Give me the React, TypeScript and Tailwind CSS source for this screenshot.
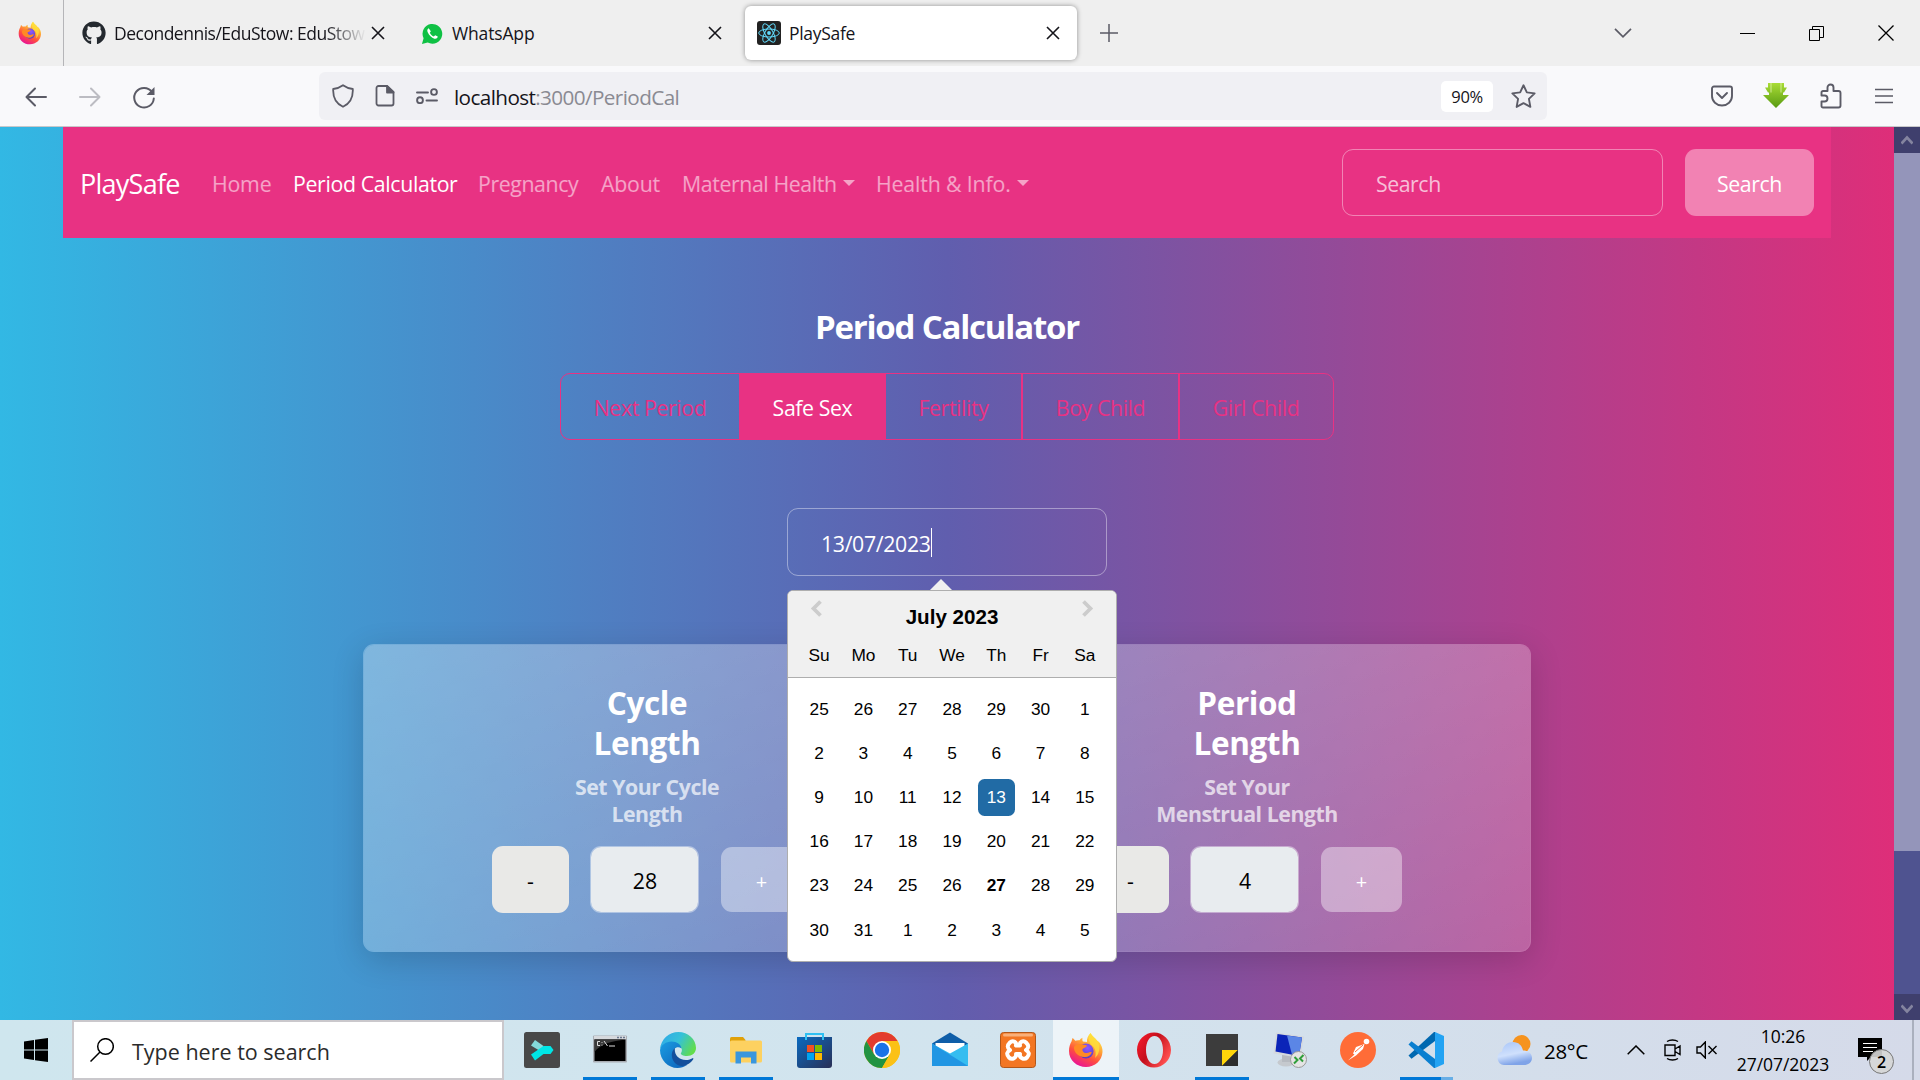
import React from "react";
import { FaGithub } from "react-icons/fa";

function FirefoxLogo({ className, id }: { className: string; id: string }) {
  return (
    <svg viewBox="0 0 36 36" className={className}>
      <defs>
        <linearGradient id={id + "a"} x1="0.8" y1="0.05" x2="0.3" y2="1">
          <stop offset="0" stopColor="#fff44f" />
          <stop offset="0.35" stopColor="#ffa436" />
          <stop offset="0.65" stopColor="#ff4f3e" />
          <stop offset="1" stopColor="#e8109a" />
        </linearGradient>
        <radialGradient id={id + "b"} cx="0.6" cy="0.3" r="0.8">
          <stop offset="0" stopColor="#9059ff" />
          <stop offset="1" stopColor="#4a3bb8" />
        </radialGradient>
      </defs>
      <path
        d="M22.5 1c1.5 3.5 5 5 6.5 7.500 1 .5 2 1.200 2.500 2 2 3 3.300 6 3 9.500C34 28.500 27 35 18 35S1 28.500 1 19c0-4 1-7 2.500-9.500L4.500 6c1 .5 2 1.700 2.800 2.800 1-.6 3-.8 4.200-.5.7-1.200 1.700-2 3-2.600-.3 1.300-.2 2.700.4 3.700 1.500.2 3 .4 4.100.6C18.500 7 20 3.500 22.500 1z"
        fill={`url(#${id}a)`}
      />
      <circle cx="18" cy="19" r="7.600" fill={`url(#${id}b)`} />
      <path d="M6 15c2-3 6-3.500 8.500-2.500 2 .4 4 .6 4.500 1.300-.4 1.800-3 2-4.500 3.200-.5 2 1.500 4.500 4.500 4 2-.4 3-1.500 4.800-.8-1 3.300-4.300 5.300-7.800 4.800C10 24.500 5.500 20 6 15z" fill="#ff8a24" />
      <path d="M22.500 1c1.500 3.500 7 6 8.500 12 1 5-.5 10-4 13 1.500-5 .5-10-3-12.500C21 11 19.500 6 22.500 1z" fill="#ffdd3a" opacity="0.85" />
    </svg>
  );
}

function Cross({ className }: { className: string }) {
  return (
    <svg viewBox="0 0 14 14" className={className} fill="none" stroke="currentColor">
      <path d="M1 1l12 12M13 1L1 13" strokeWidth="1.600" />
    </svg>
  );
}

function TabStrip() {
  return (
    <div className="flex h-[66px] items-center bg-[#efefef] text-[17.5px] text-[#15141a]">
      <div className="flex h-full w-[64px] items-center border-r border-[#b5b5b8] pl-[18px]">
        <FirefoxLogo className="h-6 w-6" id="tabff" />
      </div>
      <div className="flex w-[347px] items-center pl-[18px]">
        <FaGithub className="h-6 w-6 text-[#24292f]" />
        <span className="ml-[8px] w-[252px] overflow-hidden whitespace-nowrap pt-px tracking-[-0.5px] [mask-image:linear-gradient(to_right,black_84%,transparent_100%)]">
          Decondennis/EduStow: EduStow
        </span>
        <Cross className="ml-[5px] h-3.5 w-3.5" />
      </div>
      <div className="flex w-[334px] items-center pl-[10px]">
        <svg viewBox="0 0 24 24" className="h-[23px] w-[23px]">
          <path d="M1 23l1.700-6A10.300 10.300 0 1 1 7 21.400z" fill="#0fc144" />
          <path d="M8 6.500c-1.500.8-1.800 2.500-1 4.300 1.500 3.300 4 5.600 7 6.600 1.600.4 3.300-.4 3.500-2.200l-2.700-1.500-1.400 1.400c-2-.8-3.300-2.200-4.200-4l1.100-1.500z" fill="#fff" />
        </svg>
        <span className="ml-[8px] w-[256px] pt-px tracking-[-0.15px]">WhatsApp</span>
        <Cross className="h-3.5 w-3.5" />
      </div>
      <div className="flex h-[54px] w-[332px] items-center rounded-[6px] bg-white pl-[12px] shadow-[0_0_5px_rgba(0,0,0,0.4)]">
        <svg viewBox="0 0 24 24" className="h-6 w-6" fill="none" stroke="#61dafb" strokeWidth="1">
          <rect width="24" height="24" rx="3" fill="#222" stroke="none" />
          <ellipse cx="12" cy="12" rx="10.300" ry="4" />
          <ellipse cx="12" cy="12" rx="10.300" ry="4" transform="rotate(60 12 12)" />
          <ellipse cx="12" cy="12" rx="10.300" ry="4" transform="rotate(120 12 12)" />
          <circle cx="12" cy="12" r="1.900" fill="#61dafb" stroke="none" />
        </svg>
        <span className="ml-[8px] w-[257px] pt-px tracking-[-0.3px]">PlaySafe</span>
        <Cross className="h-3.5 w-3.5" />
      </div>
      <svg viewBox="0 0 18 18" className="ml-[23px] h-[18px] w-[18px]" stroke="#5b5b66" strokeWidth="1.500">
        <path d="M9 0v18M0 9h18" />
      </svg>
      <div className="ml-auto flex items-center pr-[26px]">
        <svg viewBox="0 0 18 10" className="mr-[108px] h-[10px] w-[18px]" fill="none" stroke="#5b5b66" strokeWidth="1.700">
          <path d="M1 .8l8 8 8-8" />
        </svg>
        <div className="mr-[54px] h-px w-[15px] bg-black" />
        <svg viewBox="0 0 15 15" className="mr-[54px] h-[15px] w-[15px]" fill="none" stroke="#000">
          <path d="M.5 3.500h10v11H.5zM3.500 3.500V.5h11v11h-4" />
        </svg>
        <svg viewBox="0 0 16 16" className="h-4 w-4" stroke="#000" strokeWidth="1.300">
          <path d="M.5.5l15 15M15.500.5l-15 15" />
        </svg>
      </div>
    </div>
  );
}

function AddressBar() {
  return (
    <div className="flex h-[61px] items-center border-b border-[#c8c8ca] bg-[#f9f9fb] text-[#5b5b66]">
      <div className="flex w-[319px] items-center pl-[25px]">
        <svg viewBox="0 0 22 20" className="mt-px h-5 w-[22px]" fill="none" stroke="currentColor" strokeWidth="2" strokeLinecap="round" strokeLinejoin="round">
          <path d="M10 1.500L1.500 10l8.500 8.500M2 10h19" />
        </svg>
        <svg viewBox="0 0 22 20" className="mt-px ml-[32px] h-5 w-[22px]" fill="none" stroke="#bcbcc2" strokeWidth="2" strokeLinecap="round" strokeLinejoin="round">
          <path d="M12 1.500l8.500 8.500-8.500 8.500M20 10H1" />
        </svg>
        <svg viewBox="0 0 24 24" className="mt-[3px] ml-[31px] h-6 w-6" fill="none" stroke="currentColor" strokeWidth="2" strokeLinecap="round">
          <path d="M20 6A9.800 9.800 0 1 0 21.800 12.500" />
          <path d="M22.500 1v8h-8z" fill="currentColor" stroke="none" />
        </svg>
      </div>
      <div className="flex h-12 w-[1228px] items-center rounded-[6px] bg-[#f0f0f4] pl-[13px]">
        <svg viewBox="0 0 22 24" className="h-6 w-[22px]" fill="none" stroke="currentColor" strokeWidth="1.800" strokeLinejoin="round">
          <path d="M11 1.200c3 2.200 6 3.300 9.800 3.800C21.200 13 18 19.500 11 22.800 4 19.500.8 13 1.200 5 5 4.500 8 3.400 11 1.200z" />
        </svg>
        <svg viewBox="0 0 20 22" className="ml-[21px] h-[22px] w-5" fill="none" stroke="currentColor" strokeWidth="1.800" strokeLinejoin="round">
          <path d="M3.500 1h8.500l6.500 6v11.500a2 2 0 0 1-2 2h-13a2 2 0 0 1-2-2V3a2 2 0 0 1 2-2z" />
          <path d="M12 1v6.500h6.500z" fill="currentColor" />
        </svg>
        <svg viewBox="0 0 22 16" className="ml-[21px] h-4 w-[22px]" fill="none" stroke="currentColor" strokeWidth="1.900" strokeLinecap="round">
          <path d="M1 4.500h11M10.500 12.500H21" />
          <circle cx="18" cy="4" r="2.900" />
          <circle cx="4" cy="12.200" r="2.900" />
        </svg>
        <span className="ml-[16px] w-[987px] pt-[3px] text-[20.7px] tracking-[-0.6px] text-[#8a8a92]">
          <span className="text-[#15141a]">localhost</span>:3000/PeriodCal
        </span>
        <div className="flex h-[31px] w-[52px] items-center justify-center rounded-[5px] bg-white pt-[2px] text-[16.5px] tracking-[-0.4px] text-[#15141a]">90%</div>
        <svg viewBox="0 0 24 24" className="ml-[18px] h-[25px] w-[25px]" fill="none" stroke="currentColor" strokeWidth="1.800" strokeLinejoin="round">
          <path d="M12 1.200l3.200 6.800 7.500 1-5.500 5.300 1.400 7.700L12 18.400 5.400 22l1.400-7.700L1.300 9l7.500-1z" />
        </svg>
      </div>
      <div className="ml-auto flex items-center pr-[27px]">
        <svg viewBox="0 0 22 22" className="h-[22px] w-[22px]" fill="none" stroke="currentColor" strokeWidth="1.900" strokeLinecap="round" strokeLinejoin="round">
          <path d="M3 1.500h16a2 2 0 0 1 2 2V11a10 9.500 0 0 1-20 0V3.500a2 2 0 0 1 2-2z" />
          <path d="M6 8l5 5 5-5" />
        </svg>
        <svg viewBox="0 0 26 26" className="ml-[30px] h-[26px] w-[26px]">
          <defs>
            <linearGradient id="dlgreen" x1="0" y1="0" x2="0" y2="1">
              <stop offset="0" stopColor="#a9dc35" />
              <stop offset="1" stopColor="#589a12" />
            </linearGradient>
          </defs>
          <path d="M5 0h16v4.500h3l-3 5h-1v2.500h6L13 25 0 12h6V9.500H5l-3-5h3z" fill="url(#dlgreen)" />
          <path d="M8 0v9.500M18 0v9.500" stroke="#dff5b0" strokeWidth="0.800" fill="none" />
        </svg>
        <svg viewBox="0 0 22 26" className="ml-[31px] h-[26px] w-[22px]" fill="none" stroke="currentColor" strokeWidth="1.900" strokeLinejoin="round">
          <path d="M7.500 8V4.500a3 3 0 0 1 6 0V8h5a2 2 0 0 1 2 2v12.500a2 2 0 0 1-2 2H3a1.500 1.500 0 0 1-1.500-1.500v-4.500h3a3 3 0 0 0 0-6h-3V9.500A1.500 1.500 0 0 1 3 8z" />
        </svg>
        <svg viewBox="0 0 18 16" className="ml-[33px] h-4 w-[18px]" stroke="currentColor" strokeWidth="1.700">
          <path d="M0 1.500h18M0 8h18M0 14.500h18" />
        </svg>
      </div>
    </div>
  );
}

function Caret() {
  return <span className="ml-[6px] h-0 w-0 border-x-[6px] border-t-[6px] border-x-transparent border-t-current" />;
}

function Navbar() {
  return (
    <nav className="ml-[63px] flex h-[111px] w-[1768px] items-center bg-[#e83283] pl-[17px] text-[21.3px] text-white/55">
      <span className="w-[132px] pt-[3px] text-[27px] tracking-[-0.75px] text-white">PlaySafe</span>
      <span className="w-[81px] pt-[2px] tracking-[-0.2px]">Home</span>
      <span className="w-[185px] whitespace-nowrap pt-[2px] tracking-[-0.35px] text-white">Period Calculator</span>
      <span className="w-[123px] pt-[2px] tracking-[-0.4px]">Pregnancy</span>
      <span className="w-[81px] pt-[2px] tracking-[-0.2px]">About</span>
      <span className="flex w-[194px] items-center whitespace-nowrap"><span className="pt-[2px] tracking-[-0.4px]">Maternal Health</span><Caret /></span>
      <span className="flex items-center whitespace-nowrap"><span className="pt-[2px] tracking-[-0.15px]">Health &amp; Info.</span><Caret /></span>
      <div className="ml-auto flex h-[67px] w-[321px] items-center rounded-[11px] border border-white/40 pt-[2px] pl-[33px] tracking-[-0.45px] text-white/70">Search</div>
      <div className="mr-[17px] ml-[22px] flex h-[67px] w-[129px] items-center justify-center rounded-[11px] bg-[#f282b3] pt-[2px] tracking-[-0.4px] text-white">Search</div>
    </nav>
  );
}

const weeks = [
  [25, 26, 27, 28, 29, 30, 1],
  [2, 3, 4, 5, 6, 7, 8],
  [9, 10, 11, 12, 13, 14, 15],
  [16, 17, 18, 19, 20, 21, 22],
  [23, 24, 25, 26, 27, 28, 29],
  [30, 31, 1, 2, 3, 4, 5],
];

function Calendar() {
  return (
    <div className="absolute top-[70px] -left-px z-10 flex w-[330px] flex-col font-['Liberation_Sans',Arial,sans-serif] text-[17.3px] text-black">
      <svg viewBox="0 0 22 11" className="ml-[143px] h-[11px] w-[22px]">
        <path d="M0 11L11 0l11 11z" fill="#f0f0f0" />
      </svg>
      <div className="h-[372px] overflow-hidden rounded-[6px] border border-[#aeaeae] bg-white">
        <div className="h-[87px] border-b border-[#aeaeae] bg-[#f0f0f0]">
          <div className="flex h-[51px] items-start justify-between px-[22px] pt-[8px]">
            <svg viewBox="0 0 12 17" className="mt-px h-[17px] w-3" fill="none" stroke="#ccc" strokeWidth="3.800">
              <path d="M10.500 1.500l-7 7 7 7" />
            </svg>
            <span className="pt-[3px] text-[20.6px] leading-[30px] font-bold">July 2023</span>
            <svg viewBox="0 0 12 17" className="mt-px h-[17px] w-3" fill="none" stroke="#ccc" strokeWidth="3.800">
              <path d="M1.500 1.500l7 7-7 7" />
            </svg>
          </div>
          <div className="ml-[9px] grid w-[310px] grid-cols-7 text-center leading-[26px]">
            {["Su", "Mo", "Tu", "We", "Th", "Fr", "Sa"].map((d) => (
              <span key={d}>{d}</span>
            ))}
          </div>
        </div>
        <div className="mt-[9.5px] ml-[9px] grid w-[310px] grid-cols-7">
          {weeks.map((w, r) =>
            w.map((d, c) => (
              <div key={r + "-" + c} className="flex h-[44.2px] items-center justify-center">
                {r === 2 && c === 4 ? (
                  <span className="flex h-[37px] w-[37px] items-center justify-center rounded-[6.5px] bg-[#216ba5] text-white">{d}</span>
                ) : r === 4 && c === 4 ? (
                  <b>{d}</b>
                ) : (
                  d
                )}
              </div>
            ))
          )}
        </div>
      </div>
    </div>
  );
}

function Counter({ title, lines, value }: { title: string; lines: string[]; value: number }) {
  return (
    <div className="flex w-[310px] flex-col items-center pt-[38px] text-center">
      <h2 className="text-[31.5px] leading-10 font-bold tracking-[-0.4px]">
        {title}
        <br />
        Length
      </h2>
      <p className="mt-[10px] text-[21.3px] leading-[27px] font-bold tracking-[-0.45px] text-white/70">
        {lines[0]}
        <br />
        {lines[1]}
      </p>
      <div className="mt-[19px] flex w-[310px] items-center text-[21.3px] text-black">
        <span className="flex h-[67px] w-[77px] items-center justify-center rounded-[11px] bg-[#e9e9e7] pt-[3px]">-</span>
        <span className="ml-[21px] flex h-[67px] w-[109px] items-center justify-center rounded-[11px] border border-white/40 bg-[#e8ecef] bg-clip-padding pt-[3px] pl-px">{value}</span>
        <span className="ml-[22px] flex h-[65px] w-[81px] items-center justify-center rounded-[11px] bg-white/40 pt-[5px] text-[20px] text-white">+</span>
      </div>
    </div>
  );
}

function Page() {
  return (
    <div className="flex h-[893px]">
      <main className="w-[1894px] bg-[linear-gradient(to_right,#32b8e4,#605eae_50%,#de2e79)] text-white">
        <Navbar />
        <div className="flex flex-col items-center">
          <h1 className="mt-[69px] text-[33px] leading-10 font-bold tracking-[-1.2px]">Period Calculator</h1>
          <div className="mt-[26px] flex h-[67px] w-[774px] overflow-hidden rounded-[10px] border border-[#e83283] text-[21.3px] tracking-[-0.4px] text-[#e83283]">
            <span className="flex w-[178px] items-center justify-center pt-[2px]">Next Period</span>
            <span className="flex w-[147px] items-center justify-center bg-[#e83283] pt-[2px] text-white">Safe Sex</span>
            <span className="flex w-[135px] items-center justify-center pt-[2px]">Fertility</span>
            <span className="flex w-[157px] items-center justify-center border-l-2 border-[#e83283] pt-[2px]">Boy Child</span>
            <span className="flex grow items-center justify-center border-l-2 border-[#e83283] pt-[2px] pr-px">Girl Child</span>
          </div>
          <div className="relative mt-[68px] flex h-[68px] w-[320px] items-center rounded-[11px] border border-white/40 pl-[33px] text-[21.3px]">
            <span className="pt-1 tracking-[-0.35px]">13/07/2023</span>
            <span className="h-[29px] w-px bg-white" />
            <Calendar />
          </div>
          <section className="mt-[68px] flex h-[308px] w-[1168px] justify-between rounded-[11px] border border-white/25 bg-[linear-gradient(to_right_bottom,rgba(255,255,255,0.32),rgba(255,255,255,0.19))] bg-clip-padding px-[128px] shadow-[0_8px_32px_rgba(0,0,0,0.16)]">
            <Counter title="Cycle" lines={["Set Your Cycle", "Length"]} value={28} />
            <Counter title="Period" lines={["Set Your", "Menstrual Length"]} value={4} />
          </section>
        </div>
      </main>
      <aside className="flex w-[26px] flex-col bg-[#9495ba]">
        <div className="flex h-[26px] items-center justify-center bg-[#3f3f6d]">
          <svg viewBox="0 0 12 10" className="h-[10px] w-3" fill="none" stroke="#84849f" strokeWidth="2.600">
            <path d="M.5 8.500L6 2.500l5.500 6" />
          </svg>
        </div>
        <div className="mt-auto h-[143px] bg-[#4f5390]" />
        <div className="flex h-[26px] items-center justify-center bg-[#3f3f6d] pt-1">
          <svg viewBox="0 0 12 10" className="h-[10px] w-3" fill="none" stroke="#84849f" strokeWidth="2.600">
            <path d="M.5 1.500L6 7.500l5.500-6" />
          </svg>
        </div>
      </aside>
    </div>
  );
}

type AppEntry = { name: string; open?: boolean; active?: boolean; split?: boolean; icon: React.ReactNode };

const apps: AppEntry[] = [
  {
    name: "filmora",
    icon: (
      <>
        <rect width="36" height="36" rx="2.500" fill="#484848" />
        <path d="M11 8l8.500 6-3.500 5-9-5.500z" fill="#83d8d8" />
        <path d="M7 22.500L19.500 14h7l3 4-3 4h-7L11 28.500z" fill="#00e5e5" />
      </>
    ),
  },
  {
    name: "cmd",
    open: true,
    icon: (
      <>
        <rect x="1" y="3.500" width="34" height="27" rx="1" fill="#a9adb3" />
        <rect x="2" y="4" width="32" height="3" fill="#d6d9dd" />
        <path d="M25 5.500h8" stroke="#6b7a90" strokeWidth="1.500" strokeDasharray="2 1" />
        <rect x="2.500" y="7.500" width="31" height="21.500" fill="#000" />
        <path d="M2.500 7.500h31C20 9 8 12 2.500 20z" fill="#3a3a3a" />
        <path d="M8 9.500H5.500v4H8M10 10v.8M10 12.700v.8M12 9l3.500 5M17 14h6" stroke="#ddd" strokeWidth="1" fill="none" />
      </>
    ),
  },
  {
    name: "edge",
    open: true,
    icon: (
      <>
        <defs>
          <linearGradient id="edgetop" x1="0" y1="0.2" x2="1" y2="0.6">
            <stop offset="0" stopColor="#2fa9e8" />
            <stop offset="0.5" stopColor="#35c1d8" />
            <stop offset="1" stopColor="#62dd4a" />
          </linearGradient>
          <linearGradient id="edgelow" x1="0" y1="0" x2="1" y2="1">
            <stop offset="0" stopColor="#1b9de2" />
            <stop offset="1" stopColor="#0b5fb8" />
          </linearGradient>
        </defs>
        <path d="M0 17C1 7 9 0 18.500 0 28 0 36 7 36 16c0 5-4 8-9 8-4 0-7-1.500-6-3 2-2.500 1-8-6-9C9 11 3 13 0 17z" fill="url(#edgetop)" />
        <path d="M0 18c1-5 6-8.500 11.500-8.500 5.500 0 9.500 3 10 7-4-3-9 0-8.500 5.500.5 7 7 12 14 11-3 2-6 3-9.500 3C8 36 0 28 0 18z" fill="url(#edgelow)" />
        <path d="M15 16c-4 3-4.500 10 0 15 5 5 12 3 16-1 2-2 3-3.500 2-4-3 2-8 3-12 1-4-1.500-7-6-6-11z" fill="#134f9c" />
      </>
    ),
  },
  {
    name: "explorer",
    open: true,
    icon: (
      <>
        <path d="M2 6.500A1.500 1.500 0 0 1 3.500 5H15l2.500 3v5H2z" fill="#e0a008" />
        <rect x="2" y="8.500" width="32" height="22" rx="1.500" fill="#fdd160" />
        <path d="M7.500 19.500h21v12h-5.500v-6h-10v6H7.500z" fill="#3a96dd" />
      </>
    ),
  },
  {
    name: "store",
    icon: (
      <>
        <defs>
          <linearGradient id="store" x1="0" y1="0" x2="1" y2="1">
            <stop offset="0" stopColor="#0a6ac0" />
            <stop offset="1" stopColor="#2a2f55" />
          </linearGradient>
        </defs>
        <path d="M1 5h35v28a3 3 0 0 1-3 3H4a3 3 0 0 1-3-3z" fill="url(#store)" />
        <path d="M10 8V2h17v6" fill="none" stroke="#2fc0f2" strokeWidth="2" />
        <path d="M11 13h7v7h-7z" fill="#f25022" />
        <path d="M19 13h7v7h-7z" fill="#7fba00" />
        <path d="M11 21h7v7h-7z" fill="#00a4ef" />
        <path d="M19 21h7v7h-7z" fill="#ffb900" />
      </>
    ),
  },
  {
    name: "chrome",
    icon: (
      <>
        <circle cx="18" cy="18" r="18" fill="#fbc116" />
        <path d="M2.400 9A18 18 0 0 1 33.600 9H18L10.200 22.500z" fill="#e33b2e" />
        <path d="M2.400 9A18 18 0 0 0 18 36l7.800-13.500H10.200z" fill="#229342" />
        <path d="M25.800 22.500L18 36A18 18 0 0 0 33.600 9H18z" fill="#fbc116" />
        <circle cx="18" cy="18" r="9" fill="#fff" />
        <circle cx="18" cy="18" r="7.200" fill="#1a73e8" />
      </>
    ),
  },
  {
    name: "mail",
    icon: (
      <>
        <path d="M0 11.500L18 .5l18 11V15H0z" fill="#0f5ea8" />
        <path d="M3.500 11h29v12h-29z" fill="#fff" />
        <path d="M0 11.500l18 10 18-10V34H0z" fill="#35bdf0" />
        <path d="M0 11.500L36 34H0z" fill="#2196e3" />
      </>
    ),
  },
  {
    name: "xampp",
    icon: (
      <>
        <rect x="0.500" y="0.500" width="35" height="35" rx="3" fill="#f37623" stroke="#b2571a" />
        <rect x="3" y="1.500" width="30" height="3" rx="1.500" fill="#f9b07a" />
        <path d="M10 10.500c3-3 7 0 6 3h4c-1-3 3-6 6-3s3 5 0 7.500c3 2 4 4 1 7.500-3 3-8 0-7-3.500h-4c1 3.500-4 6.500-7 3.500-3-3.500-2-5.500 1-7.500-3-2.500-3-4.500 0-7.500z" fill="none" stroke="#fff" strokeWidth="4" strokeLinejoin="round" />
      </>
    ),
  },
  { name: "firefox", active: true, icon: <FirefoxLogo className="h-9 w-9" id="barff" /> },
  {
    name: "opera",
    icon: (
      <>
        <defs>
          <linearGradient id="opera" x1="0" y1="0" x2="1" y2="0.6">
            <stop offset="0" stopColor="#ff1b2d" />
            <stop offset="0.5" stopColor="#c40f1c" />
            <stop offset="1" stopColor="#ff5050" />
          </linearGradient>
        </defs>
        <path fillRule="evenodd" d="M18 .5C27 .5 35 8 35 18s-8 17.500-17 17.500S1 28 1 18 9 .5 18 .5zm.5 3.500c-5 0-8.500 6-8.500 14s3.500 14 8.500 14 8.500-6 8.500-14-3.500-14-8.500-14z" fill="url(#opera)" />
      </>
    ),
  },
  {
    name: "notes",
    open: true,
    icon: (
      <>
        <path d="M2 2h32v32H2z" fill="#3c3c3c" />
        <path d="M18 18h16L18 34z" fill="#ffd60a" />
        <path d="M34 18v16H18z" fill="#2d2d2d" />
      </>
    ),
  },
  {
    name: "remote",
    icon: (
      <>
        <ellipse cx="14" cy="30.500" rx="8.500" ry="4" fill="#c5c9ce" />
        <path d="M10 23h8v7h-8z" fill="#b7bbc1" />
        <path d="M4 .5L32 4.500 28.500 26 1.500 21.500z" fill="#d5d9de" />
        <path d="M5.500 2L30 5.500 27 24 3.500 19.500z" fill="#0b24b8" />
        <path d="M15 3.400L30 5.500 27 24l-7-1.300z" fill="#5b86e6" />
        <circle cx="26.500" cy="27.500" r="8" fill="#e4e4e4" stroke="#9a9a9a" />
        <path d="M22.500 25l3 3-3.500 3.500M31.500 23L28 26.500l3 3" fill="none" stroke="#2f9e3a" strokeWidth="2" />
      </>
    ),
  },
  {
    name: "postman",
    icon: (
      <>
        <circle cx="18" cy="18" r="18" fill="#ff6c37" />
        <circle cx="26.500" cy="9.500" r="2.800" fill="#fff" />
        <path d="M24.500 12L16 15l-3 6.500 1.500 1L8 28.500l8-5 7-6.500z" fill="#fff" />
        <path d="M15 20l8-7" stroke="#ff6c37" strokeWidth="1" />
      </>
    ),
  },
  {
    name: "vscode",
    split: true,
    icon: (
      <>
        <path d="M.5 23.500l3 3.200L27 9V0h-1z" fill="#0068b0" />
        <path d="M.5 12.500l3-3.200L27 27v9h-1z" fill="#0a7fd0" />
        <path d="M27 0l9 4v28l-9 4z" fill="#23a3f3" />
      </>
    ),
  },
];

function Taskbar() {
  return (
    <footer className="flex h-[60px] items-center bg-[linear-gradient(to_right,#cfe6ee,#d2e4ee_50%,#d5dae9)] text-black">
      <div className="flex w-[72px] pl-6">
        <svg viewBox="0 0 24 24" className="h-6 w-6">
          <path d="M0 3.400L10 2v9.500H0zM11 1.800L24 0v11.500H11zM0 12.500h10V22L0 20.600zM11 12.500h13V24l-13-1.800z" />
        </svg>
      </div>
      <div className="flex h-full w-[432px] items-center border-2 border-[#cac8cc] bg-white pl-4 text-[21.5px] text-[#2b2b2b]">
        <svg viewBox="0 0 24 24" className="h-6 w-6" fill="none" stroke="#000" strokeWidth="1.500">
          <circle cx="15.500" cy="8.500" r="7.800" />
          <path d="M10 14L.5 23.500" />
        </svg>
        <span className="ml-[18px] pt-[5px]">Type here to search</span>
      </div>
      <div className="ml-[4px] flex h-full">
        {apps.map((a) => (
          <div key={a.name} className={a.active ? "flex h-full w-[68px] flex-col items-center border-x border-transparent bg-white/60 bg-clip-padding" : "flex h-full w-[68px] flex-col items-center"}>
            <svg viewBox="0 0 36 36" className="mt-3 h-9 w-9">{a.icon}</svg>
            <div
              className={
                a.active
                  ? "mt-auto h-[3px] w-[66px] bg-[#0078d7]"
                  : a.split
                  ? "mt-auto h-[3px] w-[53px] border-r-[12px] border-[#67aee6] bg-[#0078d7]"
                  : a.open
                  ? "mt-auto h-[3px] w-[54px] bg-[#0078d7]"
                  : "hidden"
              }
            />
          </div>
        ))}
      </div>
      <div className="ml-auto flex h-full items-center">
        <svg viewBox="0 0 36 30" className="h-[30px] w-9">
          <defs>
            <linearGradient id="cloud" x1="0" y1="0" x2="0.300" y2="1">
              <stop offset="0" stopColor="#a9c6f8" />
              <stop offset="0.600" stopColor="#cfe0fc" />
              <stop offset="1" stopColor="#7fa3e8" />
            </linearGradient>
          </defs>
          <circle cx="25.500" cy="9" r="9" fill="#f6931e" />
          <path d="M8 30a7 7 0 0 1-2-13.500C7 10 12 7 17 7c5.500 0 9 3.500 10 8.500 5 0 9 3 9 7.500S32 30 28 30z" fill="url(#cloud)" />
        </svg>
        <span className="ml-[12px] w-[83px] pt-[3px] text-[20.5px] tracking-[-0.3px]">28°C</span>
        <svg viewBox="0 0 18 10" className="h-[10px] w-[18px]" fill="none" stroke="#000" strokeWidth="1.500">
          <path d="M.7 9.300L9 1l8.300 8.300" />
        </svg>
        <svg viewBox="0 0 17 22" className="ml-[19px] h-[22px] w-[17px]" fill="none" stroke="#000" strokeWidth="1.400">
          <path d="M3 2.500c3-2 8-2 11 0M3 19.500c3 2 8 2 11 0M1 6h10v10.500H1zM11 10l5-3v8.500l-5-3" />
        </svg>
        <svg viewBox="0 0 21 18" className="ml-[15px] h-[18px] w-[21px]" fill="none" stroke="#000" strokeWidth="1.400">
          <path d="M1 6h3.500L9.300 1v16L4.500 12H1zM12.500 5l8 8M20.500 5l-8 8" />
        </svg>
        <div className="ml-[16px] w-[100px] text-center text-[17.5px] leading-7 tracking-[-0.05px]">
          <div>10:26</div>
          <div>27/07/2023</div>
        </div>
        <div className="relative ml-[25px] w-[54px]">
          <svg viewBox="0 0 24 24" className="h-6 w-6">
            <path d="M0 0h24v19H13l-4 4v-4H0z" />
            <path d="M5 5.500h14M5 9.500h14M5 13.500h10" stroke="#fff" strokeWidth="1.200" />
          </svg>
          <span className="absolute top-[11px] left-[11px] flex h-[25px] w-[25px] items-center justify-center rounded-full border border-[#777] bg-[#d6d6d6]/90 text-[16px] font-semibold">2</span>
        </div>
        <div className="mr-[6px] h-full w-[2px] bg-[#aab0be]" />
      </div>
    </footer>
  );
}

export default function App() {
  return (
    <div className="h-[1080px] w-[1920px] overflow-hidden font-['Open_Sans','Noto_Sans',sans-serif]">
      <TabStrip />
      <AddressBar />
      <Page />
      <Taskbar />
    </div>
  );
}
